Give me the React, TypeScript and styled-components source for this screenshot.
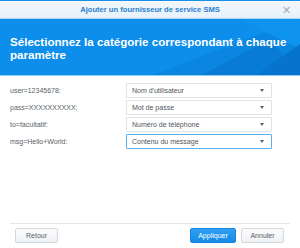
import React from 'react';
import styled, { createGlobalStyle } from 'styled-components';

const GlobalStyle = createGlobalStyle`
  html, body {
    margin: 0;
    padding: 0;
    background: #ffffff;
  }
  body {
    font-family: 'Liberation Sans', Arial, sans-serif;
  }
`;

const Dialog = styled.div`
  width: 300px;
  height: 248px;
  display: flex;
  flex-direction: column;
  box-sizing: border-box;
  border-top: 1px solid #1a8fe6;
  background: #fff;
  overflow: hidden;
`;

const TitleBar = styled.div`
  height: 17px;
  position: relative;
  display: flex;
  align-items: center;
  justify-content: center;
  background: linear-gradient(#f3f8fd, #e6f1fb);
  border-bottom: 1px solid #a9d5f7;
  font-size: 7.6px;
  font-weight: bold;
  color: #2b7fce;
`;

const Close = styled.span`
  position: absolute;
  right: 9px;
  top: 3px;
  font-size: 11px;
  font-weight: normal;
  color: #a8acb0;
`;

const Header = styled.div`
  position: relative;
  height: 57px;
  background: #0c8eea;
  border-bottom: 1px solid #8fcdf5;
  padding: 16px 10px 0;
  box-sizing: border-box;
  overflow: hidden;
`;

const Deco = styled.svg`
  position: absolute;
  inset: 0;
`;

const Heading = styled.h1`
  position: relative;
  margin: 0;
  font-size: 11.6px;
  line-height: 13px;
  font-weight: bold;
  color: #ffffff;
`;

const Body = styled.div`
  flex: 1;
  display: flex;
  flex-direction: column;
  gap: 2px;
  padding: 7px 0 0 10px;
`;

const Row = styled.div`
  display: flex;
  align-items: center;
  height: 15px;
`;

const Label = styled.div`
  width: 116px;
  font-size: 7px;
  color: #5a5f66;
`;

const Select = styled.div<{ $focused?: boolean }>`
  width: 146px;
  height: 15px;
  box-sizing: border-box;
  display: flex;
  align-items: center;
  justify-content: space-between;
  padding: 0 7px 0 5px;
  border: 1px solid ${(p) => (p.$focused ? '#5cb0ee' : '#dfe3e8')};
  border-radius: 1px;
  font-size: 7px;
  color: #4f555c;
`;

const Caret = styled.span`
  width: 0;
  height: 0;
  border-left: 2.5px solid transparent;
  border-right: 2.5px solid transparent;
  border-top: 3px solid #5a6068;
`;

const Footer = styled.div`
  margin: 0 10px 5px;
  border-top: 1px solid #e4e8ec;
  padding: 4px 6px 0 5px;
  display: flex;
  gap: 5px;
`;

const Button = styled.button<{ $primary?: boolean }>`
  height: 15px;
  padding: 0;
  width: ${(p) => (p.$primary ? 46 : 43)}px;
  font-family: inherit;
  font-size: 7px;
  border-radius: 2px;
  border: 1px solid ${(p) => (p.$primary ? '#1a86df' : '#d4d9de')};
  background: ${(p) => (p.$primary ? 'linear-gradient(#2fa0f2, #148ae6)' : 'linear-gradient(#fbfcfd, #eef1f4)')};
  color: ${(p) => (p.$primary ? '#ffffff' : '#5a6068')};
`;

const Spacer = styled.div`
  flex: 1;
`;

const rows = [
  { label: 'user=12345678:', value: "Nom d'utilisateur" },
  { label: 'pass=XXXXXXXXXX:', value: 'Mot de passe' },
  { label: 'to=facultatif:', value: 'Numéro de téléphone' },
  { label: 'msg=Hello+World:', value: 'Contenu du message', focused: true },
];

export default function App() {
  return (
    <>
      <GlobalStyle />
      <Dialog>
        <TitleBar>
          Ajouter un fournisseur de service SMS
          <Close>✕</Close>
        </TitleBar>
        <Header>
          <Deco width="300" height="57" viewBox="0 0 300 57">
            <polygon points="150,57 300,0 300,57" fill="#0a85e0" />
            <polygon points="200,57 270,20 300,57" fill="#077bd5" />
            <polygon points="240,0 300,0 300,30" fill="#0e93ee" />
            <polygon points="255,57 300,25 300,57" fill="#0674cc" />
          </Deco>
          <Heading>Sélectionnez la catégorie correspondant à chaque paramètre</Heading>
        </Header>
        <Body>
          {rows.map((r) => (
            <Row key={r.label}>
              <Label>{r.label}</Label>
              <Select $focused={r.focused}>
                {r.value}
                <Caret />
              </Select>
            </Row>
          ))}
        </Body>
        <Footer>
          <Button>Retour</Button>
          <Spacer />
          <Button $primary>Appliquer</Button>
          <Button>Annuler</Button>
        </Footer>
      </Dialog>
    </>
  );
}
